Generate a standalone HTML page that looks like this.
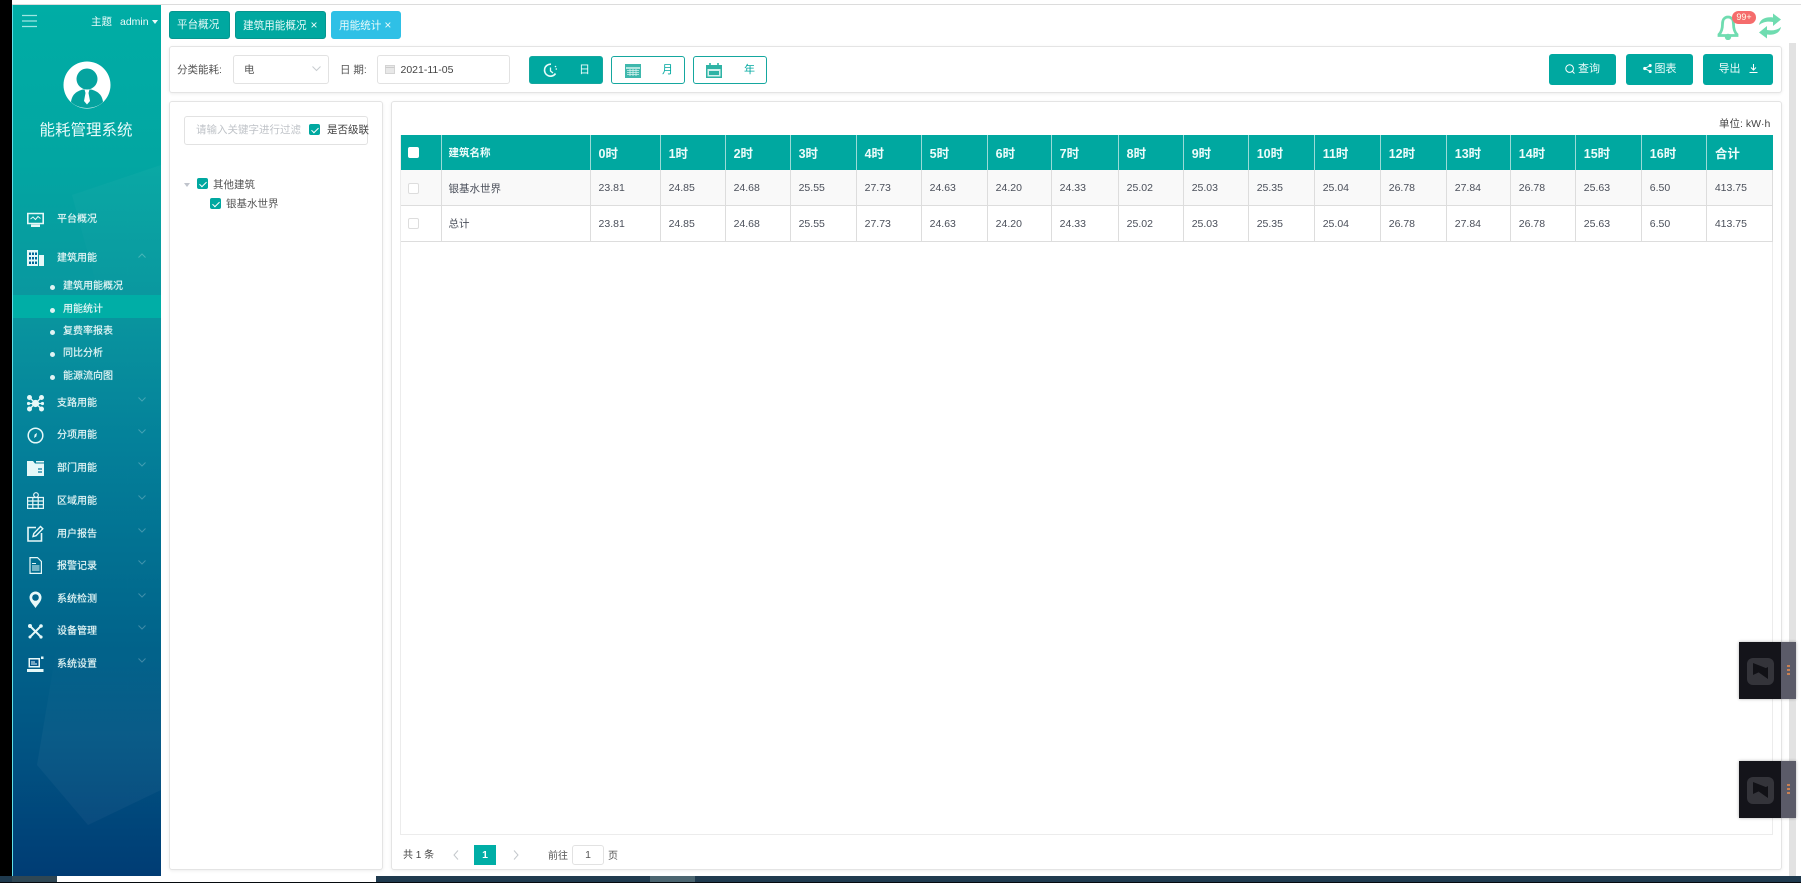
<!DOCTYPE html>
<html lang="zh"><head><meta charset="utf-8"><title>能耗管理系统</title>
<style>
*{box-sizing:border-box}
html,body{margin:0;padding:0;width:1801px;height:883px;overflow:hidden;background:#fff;font-family:"Liberation Sans","Noto Sans CJK SC",sans-serif;color:#555}
#r{position:relative;width:1801px;height:883px;overflow:hidden;filter:blur(.35px)}
.a,.t{position:absolute}
.t{white-space:nowrap;line-height:1}
.card{position:absolute;background:#fff;border:1px solid #e4e4e4;border-radius:3px;box-shadow:0 1px 3px rgba(0,0,0,.07)}
.tab{position:absolute;top:11px;height:28px;border-radius:3px;background:#00a8a0;border:1px solid #06968f;color:#e8fbfa;font-size:10.6px;line-height:26px;padding-left:7px;white-space:nowrap}
.m{position:absolute;left:57px;font-size:10px;line-height:12px;margin-top:1.5px;color:#e3f5f5;white-space:nowrap;text-shadow:0 0 .6px #e3f5f5}
.s{position:absolute;left:63px;font-size:10px;line-height:12px;margin-top:1.5px;color:#e3f5f5;white-space:nowrap;text-shadow:0 0 .6px #e3f5f5}
.s:before{content:"";position:absolute;left:-13px;top:4px;width:5px;height:5px;border-radius:50%;background:#dff3f3}
.i{position:absolute;left:27px;width:17px;height:17px;margin-top:1px}
.c{position:absolute;left:138px;width:8px;height:5px;margin-top:-2px}
.box{position:absolute;background:#fff;border:1px solid #e2e2e2;border-radius:3px}
.cb{position:absolute;width:11px;height:11px;background:#00a8a0;border-radius:2px}
.cb:after{content:"";position:absolute;left:3.5px;top:1.5px;width:3px;height:6px;border:solid #fff;border-width:0 1.3px 1.3px 0;transform:rotate(45deg)}
.pb{position:absolute;top:56px;width:74px;height:28px;border:1px solid #15a79f;border-radius:3px;color:#00a8a0;font-size:11px}
.gb{position:absolute;top:54px;height:31px;background:#00a8a0;border-radius:3px;color:#e9fbfa;font-size:11px;line-height:31px;text-align:center}
table{position:absolute;left:401px;top:135px;width:1372px;border-collapse:collapse;table-layout:fixed;font-size:10.5px;color:#4a4f5a}
th{height:35px;background:#00a8a0;color:#eefcfb;text-align:left;padding:0 0 0 8px;font-size:12.5px;border-right:1px solid #9adbd7;font-weight:bold}
th.n{font-size:10.5px}
td{height:35.5px;padding:1px 0 0 8px;border-right:1px solid #ddd;border-bottom:1px solid #ddd}
tr.o td{background:#f9f9f9}
.rc{display:block;width:11px;height:11px;border:1px solid #ddd;background:#fff;border-radius:2px;margin-left:-1px}
.w{position:absolute;left:1739px;width:57px;height:57px;background:#14141a;box-shadow:0 0 3px rgba(0,0,0,.3)}
.w b{position:absolute;left:42px;top:0;width:15px;height:57px;background:#5b5b68}
.w i{position:absolute;left:48px;width:3px;height:2px;background:#c98052}
.w svg{position:absolute;left:8px;top:16px}
</style></head><body><div id="r">

<!-- chrome around -->
<div class="a" style="left:0;top:0;width:12px;height:883px;background:#000"></div>
<div class="a" style="left:12px;top:4px;width:1789px;height:1px;background:#dcdcdc"></div>
<div class="a" style="left:0;top:876px;width:1801px;height:7px;background:#1f3a4e"></div>
<div class="a" style="left:12px;top:876px;width:45px;height:6px;background:#2f4754"></div>
<div class="a" style="left:57px;top:876px;width:319px;height:6px;background:#fff"></div>
<div class="a" style="left:650px;top:876px;width:45px;height:6px;background:#4b6570"></div>
<div class="a" style="left:0;top:882px;width:1801px;height:1px;background:#05090d"></div>

<!-- sidebar -->
<div class="a" style="left:12px;top:5px;width:149px;height:871px;background:linear-gradient(180deg,#00ada5 0%,#02a6a2 18%,#0a979f 34%,#04819a 50%,#016a8e 68%,#015483 85%,#003c74 100%);border-left:1px solid #5fe0e8"></div>
<svg class="a" style="left:12px;top:5px" width="149" height="871">
<defs>
<linearGradient id="fa" x1="0" y1="0" x2="0" y2="1"><stop offset="0" stop-color="#fff" stop-opacity="0"/><stop offset=".5" stop-color="#fff" stop-opacity=".035"/><stop offset="1" stop-color="#fff" stop-opacity=".035"/></linearGradient>
<linearGradient id="fb" x1="0" y1="0" x2="0" y2="1"><stop offset="0" stop-color="#fff" stop-opacity=".03"/><stop offset="1" stop-color="#fff" stop-opacity="0"/></linearGradient>
</defs>
<polygon points="60,190 149,160 149,300 90,300" fill="url(#fb)"/>
<polygon points="25,760 76,820 149,785 149,640 45,640" fill="url(#fa)"/>
</svg>
<div class="a" style="left:13px;top:295px;width:148px;height:23px;background:#00aea6"></div>

<!-- header in sidebar -->
<svg class="a" style="left:22px;top:14px" width="15" height="14"><path d="M0 1.5H15M0 7H15M0 12.5H15" stroke="#9fe6e2" stroke-width="1.2" fill="none"/></svg>
<div class="t" style="left:91px;top:17px;font-size:10.5px;color:#eafafa">主题</div>
<div class="t" style="left:120px;top:17px;font-size:10.5px;color:#eafafa">admin</div>
<div class="a" style="left:152px;top:20px;border:3.5px solid transparent;border-top:4px solid #eafafa;border-bottom:0"></div>

<svg class="a" style="left:63px;top:61px" width="48" height="48" viewBox="0 0 48 48">
<circle cx="24" cy="24" r="23.5" fill="#fff"/>
<circle cx="24" cy="18" r="10.5" fill="#05a39f"/>
<path d="M8 41C9 33 14 30 20 28.5H28C34 30 39 33 40 41C36 45 30 47 24 47C18 47 12 45 8 41Z" fill="#05a39f"/>
<path d="M21.5 28.5H26.5L25.5 32L27 40L24 43.5L21 40L22.5 32Z" fill="#fff"/>
</svg>
<div class="t" style="left:39.5px;top:123px;font-size:15.5px;color:#e8fbfa">能耗管理系统</div>

<!-- menu -->
<div class="m" style="top:212px">平台概况</div>
<svg class="i" style="top:211px" viewBox="0 0 17 17"><path d="M.8 1.5H16.2V11.5H.8Z" fill="none" stroke="#e6f8f8" stroke-width="1.6"/><path d="M3.5 7L6 5L8.5 7.5L11 4.5L13.5 6.5" fill="none" stroke="#e6f8f8"/><path d="M4 12.5H13V15H4Z" fill="#e6f8f8"/></svg>
<div class="m" style="top:251px">建筑用能</div>
<svg class="i" style="top:249px" viewBox="0 0 17 17"><path d="M0 0H11V16H0Z" fill="#e6f8f8"/><path d="M2 2.5H4V5H2ZM5 2.5H7V5H5ZM8 2.5H10V5H8ZM2 7H4V9.5H2ZM5 7H7V9.5H5ZM8 7H10V9.5H8ZM2 11.5H4V14H2ZM5 11.5H7V14H5ZM8 11.5H10V14H8Z" fill="#069"/><path d="M12 5H17V16H12Z" fill="#e6f8f8"/></svg>
<svg class="c" style="top:255px" viewBox="0 0 8 5"><path d="M.5 4.5L4 1L7.5 4.5" fill="none" stroke="#fff" stroke-opacity=".25"/></svg>
<div class="s" style="top:279px">建筑用能概况</div>
<div class="s" style="top:302px">用能统计</div>
<div class="s" style="top:324px">复费率报表</div>
<div class="s" style="top:346px">同比分析</div>
<div class="s" style="top:369px">能源流向图</div>
<div class="m" style="top:396px">支路用能</div>
<svg class="i" style="top:394px" viewBox="0 0 17 17"><g fill="#e6f8f8"><circle cx="2.5" cy="2.5" r="2.5"/><circle cx="14.5" cy="2.5" r="2.5"/><circle cx="2.5" cy="14" r="2.5"/><circle cx="14.5" cy="14" r="2.5"/><circle cx="8.5" cy="8.5" r="3.6"/><circle cx="1.5" cy="8.5" r="1.6"/><circle cx="15.5" cy="8.5" r="1.6"/></g><path d="M2.5 2.5L14.5 14M14.5 2.5L2.5 14M1.5 8.5H15.5" stroke="#e6f8f8" stroke-width="1.3"/></svg>
<div class="m" style="top:428px">分项用能</div>
<svg class="i" style="top:426px" viewBox="0 0 17 17"><circle cx="8.5" cy="8.5" r="7.3" fill="none" stroke="#e6f8f8" stroke-width="1.5"/><path d="M10 6L9.3 9.5L7 11L7.7 7.5Z" fill="#e6f8f8"/></svg>
<div class="m" style="top:461px">部门用能</div>
<svg class="i" style="top:459px" viewBox="0 0 17 17"><path d="M0 1H6L8 3.5H17V16H0Z" fill="#e6f8f8"/><path d="M9 1H17V2.5H9Z" fill="#e6f8f8"/><path d="M11 9H15M11 12H15" stroke="#06789a" stroke-width="1.2"/></svg>
<div class="m" style="top:494px">区域用能</div>
<svg class="i" style="top:491px" viewBox="0 0 17 17"><path d="M.6 5.5H16.4V16.4H.6ZM.6 9H16.4M.6 12.7H16.4M5.8 5.5V16.4M11.2 5.5V16.4" fill="none" stroke="#e6f8f8" stroke-width="1.2"/><circle cx="9" cy="3" r="2.3" fill="#016f92" stroke="#e6f8f8" stroke-width="1.2"/></svg>
<div class="m" style="top:527px">用户报告</div>
<svg class="i" style="top:524px" viewBox="0 0 17 17"><path d="M9 2.5H1V16H14.5V8" fill="none" stroke="#e6f8f8" stroke-width="1.6"/><path d="M6 11.5L6.8 8.5L13.5 1.5L15.8 3.8L9 10.7Z" fill="none" stroke="#e6f8f8" stroke-width="1.4"/></svg>
<div class="m" style="top:559px">报警记录</div>
<svg class="i" style="top:556px" viewBox="0 0 17 17"><path d="M3 .6H10.5L14.4 4.5V16.4H3Z" fill="none" stroke="#e6f8f8" stroke-width="1.2"/><path d="M5 6.5H9M5 9H12.5M5 11H12.5M5 13H12.5" stroke="#e6f8f8"/></svg>
<div class="m" style="top:592px">系统检测</div>
<svg class="i" style="top:590px" viewBox="0 0 17 17"><path d="M8.5 17C6 13 2.5 10.5 2.5 6.5A6 6 0 0 1 14.5 6.5C14.5 10.5 11 13 8.5 17Z" fill="#e8f9f9"/><circle cx="8.5" cy="6.5" r="3.3" fill="#01658b"/></svg>
<div class="m" style="top:624px">设备管理</div>
<svg class="i" style="top:622px" viewBox="0 0 17 17"><path d="M3 3L14 14M14 3L3 14" stroke="#e6f8f8" stroke-width="2"/><circle cx="3" cy="3" r="2" fill="#e6f8f8"/><circle cx="14" cy="14" r="1.6" fill="#e6f8f8"/><circle cx="14" cy="3" r="1.8" fill="#e6f8f8"/><circle cx="3" cy="14" r="1.5" fill="#e6f8f8"/></svg>
<div class="m" style="top:657px">系统设置</div>
<svg class="i" style="top:655px" viewBox="0 0 17 17"><path d="M1.5 2H13V11.5H1.5Z" fill="#e6f8f8"/><path d="M3 3.5H11.5V10H3Z" fill="#01558a"/><path d="M4 8H10M4 6H8" stroke="#e6f8f8"/><path d="M0 13H16.5V16H0Z" fill="#e6f8f8"/><path d="M14 .5H16.5V3H14Z" fill="#e6f8f8"/></svg>
<svg class="c" style="top:399px" viewBox="0 0 8 5"><path d="M.5 .5L4 4L7.5 .5" fill="none" stroke="#fff" stroke-opacity=".25"/></svg>
<svg class="c" style="top:431px" viewBox="0 0 8 5"><path d="M.5 .5L4 4L7.5 .5" fill="none" stroke="#fff" stroke-opacity=".25"/></svg>
<svg class="c" style="top:464px" viewBox="0 0 8 5"><path d="M.5 .5L4 4L7.5 .5" fill="none" stroke="#fff" stroke-opacity=".25"/></svg>
<svg class="c" style="top:497px" viewBox="0 0 8 5"><path d="M.5 .5L4 4L7.5 .5" fill="none" stroke="#fff" stroke-opacity=".25"/></svg>
<svg class="c" style="top:530px" viewBox="0 0 8 5"><path d="M.5 .5L4 4L7.5 .5" fill="none" stroke="#fff" stroke-opacity=".25"/></svg>
<svg class="c" style="top:562px" viewBox="0 0 8 5"><path d="M.5 .5L4 4L7.5 .5" fill="none" stroke="#fff" stroke-opacity=".25"/></svg>
<svg class="c" style="top:595px" viewBox="0 0 8 5"><path d="M.5 .5L4 4L7.5 .5" fill="none" stroke="#fff" stroke-opacity=".25"/></svg>
<svg class="c" style="top:627px" viewBox="0 0 8 5"><path d="M.5 .5L4 4L7.5 .5" fill="none" stroke="#fff" stroke-opacity=".25"/></svg>
<svg class="c" style="top:660px" viewBox="0 0 8 5"><path d="M.5 .5L4 4L7.5 .5" fill="none" stroke="#fff" stroke-opacity=".25"/></svg>

<!-- tabs -->
<div class="tab" style="left:169px;width:61px">平台概况</div>
<div class="tab" style="left:235px;width:91px">建筑用能概况 <span style="margin-left:1px;font-size:12px">×</span></div>
<div class="tab" style="left:331px;width:70px;background:#2fc0e6;border-color:#2fc0e6">用能统计 <span style="font-size:12px">×</span></div>

<!-- bell + refresh -->
<svg class="a" style="left:1716px;top:14px" width="24" height="26" viewBox="0 0 24 26"><path d="M12 3C8 3 6.5 6.5 6.5 10C6.5 15 5.5 18 3 20.5V21.5H21V20.5C18.5 18 17.5 15 17.5 10C17.5 6.5 16 3 12 3Z" fill="none" stroke="#6fdcb0" stroke-width="2.8"/><circle cx="12" cy="23" r="3.2" fill="#6fdcb0"/></svg>
<div class="a" style="left:1732px;top:11px;width:24px;height:13px;border-radius:7px;background:#f56c6c;color:#ffe;font-size:9px;line-height:13px;text-align:center">99+</div>
<svg class="a" style="left:1758px;top:13px" width="24" height="26" viewBox="0 0 24 26"><path d="M1 12C2 6 8 3.5 15 4.5V0.5L23 6.5L15 13V9C9 8 5 9 1 12Z" fill="#6fdcb0"/><path d="M23 14C22 20 16 22.5 9 21.5V25.5L1 19.5L9 13V17C15 18 19 17 23 14Z" fill="#6fdcb0"/></svg>

<!-- filter card -->
<div class="card" style="left:169px;top:46px;width:1613px;height:47px"></div>
<div class="t" style="left:177px;top:64.5px;font-size:10.5px;color:#555">分类能耗:</div>
<div class="box" style="left:233px;top:55px;width:96px;height:29px"></div>
<div class="t" style="left:244px;top:64.5px;font-size:10.5px;color:#555">电</div>
<svg class="a" style="left:312px;top:66px" width="9" height="6"><path d="M.5 .5L4.5 4.5L8.5 .5" fill="none" stroke="#c8ccd0"/></svg>
<div class="t" style="left:340px;top:64.5px;font-size:10.5px;color:#555">日 期:</div>
<div class="box" style="left:377px;top:55px;width:133px;height:29px"></div>
<svg class="a" style="left:385px;top:65px" width="10" height="9"><path d="M.5 .5H9.5V8.5H.5Z" fill="#e8e8e8" stroke="#d4d4d4"/><path d="M.5 2.5H9.5" stroke="#ccc"/></svg>
<div class="t" style="left:400.5px;top:64.5px;font-size:10.5px;color:#444">2021-11-05</div>

<div class="pb" style="left:529px;background:#00a8a0;color:#eefcfb"><span class="t" style="left:49px;top:8px">日</span>
<svg class="a" style="left:13px;top:6px" width="15" height="15" viewBox="0 0 15 15"><path d="M8 1.2A6 6 0 1 0 12.5 10.5" fill="none" stroke="#e8fbfa" stroke-width="1.6"/><path d="M7.5 4.5V8L10 10" fill="none" stroke="#e8fbfa" stroke-width="1.3"/><circle cx="13.3" cy="6" r=".8" fill="#e8fbfa"/><circle cx="12.5" cy="3.5" r=".8" fill="#e8fbfa"/></svg></div>
<div class="pb" style="left:611px;width:74px"><span class="t" style="left:50px;top:8px">月</span>
<svg class="a" style="left:13px;top:6px" width="16" height="15" viewBox="0 0 16 15"><path d="M0 1H16V15H0Z" fill="#3fb8ad"/><path d="M1.5 4.5H14.5V5.5H1.5ZM2 7.5H14M2 9.5H14M2 11.5H14M5 6V13M8 6V13M11 6V13" stroke="#d8f3f0" stroke-width=".8" fill="none"/></svg></div>
<div class="pb" style="left:693px;width:74px"><span class="t" style="left:50px;top:8px">年</span>
<svg class="a" style="left:12px;top:6px" width="16" height="15" viewBox="0 0 16 15"><path d="M0 2H16V15H0Z" fill="#2fb3a5"/><path d="M1.5 6H14.5V13.5H1.5Z" fill="#d5f1ed"/><path d="M3 8H13V12H3Z" fill="#2fb3a5"/><path d="M4 0V3.5M12 0V3.5" stroke="#2fb3a5" stroke-width="1.6"/></svg></div>

<div class="gb" style="left:1549px;width:67px"><svg style="vertical-align:-2px;margin-right:3px" width="10" height="10" viewBox="0 0 10 10"><circle cx="4.6" cy="4.6" r="3.8" fill="none" stroke="#fff"/><path d="M7.5 7.5L9.5 9.5" stroke="#fff"/></svg>查询</div>
<div class="gb" style="left:1626px;width:67px"><svg style="vertical-align:-1px;margin-right:3px" width="9" height="9" viewBox="0 0 9 9"><circle cx="1.8" cy="4.5" r="1.6" fill="#fff"/><circle cx="7.2" cy="1.5" r="1.5" fill="#fff"/><circle cx="7.2" cy="7.5" r="1.5" fill="#fff"/><path d="M1.8 4.5L7.2 1.5M1.8 4.5L7.2 7.5" stroke="#fff"/></svg>图表</div>
<div class="gb" style="left:1703px;width:70px">导出<svg style="vertical-align:-1px;margin-left:8px" width="9" height="9" viewBox="0 0 9 9"><path d="M4.5 0V6M2 3.5L4.5 6L7 3.5M.5 8.5H8.5" fill="none" stroke="#fff"/></svg></div>

<!-- left card -->
<div class="card" style="left:169px;top:101px;width:214px;height:769px"></div>
<div class="box" style="left:184px;top:116px;width:184px;height:29px"></div>
<div class="t" style="left:196px;top:125px;font-size:10.5px;color:#bfc3c8">请输入关键字进行过滤</div>
<div class="cb" style="left:309px;top:124px"></div>
<div class="t" style="left:327px;top:125px;font-size:10.5px;color:#444">是否级联</div>
<div class="a" style="left:183.5px;top:183px;border:3px solid transparent;border-top:4px solid #c0c4cc;border-bottom:0"></div>
<div class="cb" style="left:197px;top:178px"></div>
<div class="t" style="left:213px;top:180px;font-size:10.5px;color:#555">其他建筑</div>
<div class="cb" style="left:210px;top:198px"></div>
<div class="t" style="left:226px;top:199px;font-size:10.5px;color:#555">银基水世界</div>

<!-- right card -->
<div class="card" style="left:391px;top:101px;width:1391px;height:769px"></div>
<div class="a" style="left:400px;top:135px;width:1373px;height:700px;border:1px solid #ececec;border-top:0"></div>
<div class="t" style="left:1719px;top:119px;font-size:10.5px;color:#444">单位: kW·h</div>
<table>
<colgroup><col style="width:40px"><col style="width:149px"><col style="width:70px"><col style="width:65px"><col style="width:65px"><col style="width:66px"><col style="width:65px"><col style="width:66px"><col style="width:64px"><col style="width:67px"><col style="width:65px"><col style="width:65px"><col style="width:66px"><col style="width:66px"><col style="width:66px"><col style="width:64px"><col style="width:65px"><col style="width:66px"><col style="width:65px"><col style="width:66px"></colgroup>
<tr><th><span class="rc" style="border-color:#fff"></span></th><th class="n" style="padding-left:7px">建筑名称</th><th>0时</th><th>1时</th><th>2时</th><th>3时</th><th>4时</th><th>5时</th><th>6时</th><th>7时</th><th>8时</th><th>9时</th><th>10时</th><th>11时</th><th>12时</th><th>13时</th><th>14时</th><th>15时</th><th>16时</th><th style="border-right:0">合计</th></tr>
<tr class="o"><td><span class="rc"></span></td><td style="padding-left:7px">银基水世界</td><td>23.81</td><td>24.85</td><td>24.68</td><td>25.55</td><td>27.73</td><td>24.63</td><td>24.20</td><td>24.33</td><td>25.02</td><td>25.03</td><td>25.35</td><td>25.04</td><td>26.78</td><td>27.84</td><td>26.78</td><td>25.63</td><td>6.50</td><td>413.75</td></tr>
<tr><td><span class="rc"></span></td><td style="padding-left:7px">总计</td><td>23.81</td><td>24.85</td><td>24.68</td><td>25.55</td><td>27.73</td><td>24.63</td><td>24.20</td><td>24.33</td><td>25.02</td><td>25.03</td><td>25.35</td><td>25.04</td><td>26.78</td><td>27.84</td><td>26.78</td><td>25.63</td><td>6.50</td><td>413.75</td></tr>
</table>

<!-- pagination -->
<div class="t" style="left:403px;top:851px;font-size:10px;color:#444">共 1 条</div>
<svg class="a" style="left:453px;top:850px" width="6" height="10"><path d="M5 .5L1 5L5 9.5" fill="none" stroke="#c4c8cc"/></svg>
<div class="a" style="left:474px;top:845px;width:22px;height:20px;background:#00aea6;color:#fff;font-size:10.5px;font-weight:bold;line-height:20px;text-align:center">1</div>
<svg class="a" style="left:513px;top:850px" width="6" height="10"><path d="M1 .5L5 5L1 9.5" fill="none" stroke="#c4c8cc"/></svg>
<div class="t" style="left:548px;top:852px;font-size:10px;color:#555">前往</div>
<div class="box" style="left:572px;top:845px;width:32px;height:20px;font-size:10.5px;line-height:18px;text-align:center;color:#555">1</div>
<div class="t" style="left:608px;top:852px;font-size:10px;color:#555">页</div>

<!-- scrollbar -->
<div class="a" style="left:1789px;top:43px;width:7px;height:833px;background:#e2e2e2"></div>

<!-- widgets -->
<div class="w" style="top:642px"><b></b><i style="top:23px"></i><i style="top:27px"></i><i style="top:31px"></i>
<svg width="27" height="27" viewBox="0 0 27 27"><rect width="27" height="27" rx="6" fill="#34343a"/><path d="M6 5L20 10.5L6 17ZM21 9V21L11 14Z" fill="#111116"/></svg></div>
<div class="w" style="top:761px"><b></b><i style="top:23px"></i><i style="top:27px"></i><i style="top:31px"></i>
<svg width="27" height="27" viewBox="0 0 27 27"><rect width="27" height="27" rx="6" fill="#34343a"/><path d="M6 5L20 10.5L6 17ZM21 9V21L11 14Z" fill="#111116"/></svg></div>

</div></body></html>
